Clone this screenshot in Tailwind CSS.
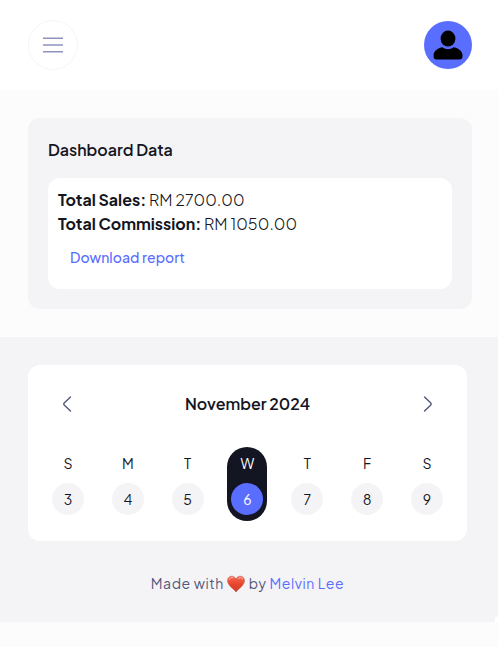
<!DOCTYPE html>
<html lang="en">
<head>
<meta charset="utf-8">
<title>Dashboard</title>
<script src="https://cdn.jsdelivr.net/npm/@tailwindcss/browser@4"></script>
</head>
<body class="w-[498px] h-[647px] overflow-hidden bg-[#fcfcfc] font-['Plus_Jakarta_Sans','Inter',sans-serif] text-[#141522] text-base leading-6">
<header class="flex h-[90px] items-center justify-between bg-white pl-7 pr-[26px]">
  <button class="flex size-[50px] items-center justify-center rounded-full border border-[#f5f5f7]" aria-label="Menu">
    <svg width="20" height="16" viewBox="0 0 20 16" fill="none" stroke="#8e92bc" stroke-width="1.5"><path d="M0 1.25H20M0 8H20M0 14.75H20"/></svg>
  </button>
  <div class="flex size-12 items-center justify-center rounded-full bg-[#596dff]">
    <svg width="30" height="30" viewBox="0 0 30 30" fill="#000"><ellipse cx="15" cy="8.6" rx="7.4" ry="8"/><path d="M9.2 17.3Q15 21.2 20.8 17.3C26.5 18.6 29.5 21.8 29.5 25.3V27Q29.5 29.4 27 29.4H3Q.6 29.4 .6 27V25.3C.6 21.8 3.5 18.6 9.2 17.3Z"/></svg>
  </div>
</header>
<main>
  <section class="pt-7 pb-7 pl-7 pr-[26px]">
    <div class="h-[191px] rounded-xl bg-[#f4f4f7] p-5">
      <h1 class="font-semibold">Dashboard Data</h1>
      <div class="mt-4 h-[111px] rounded-xl bg-white p-[10px]">
        <p class="flex whitespace-nowrap"><b class="w-[91px] font-bold">Total Sales:</b><span class="font-light tracking-[0.1px]">RM 2700.00</span></p>
        <p class="flex whitespace-nowrap"><b class="w-[146px] font-bold">Total Commission:</b><span class="font-light tracking-[0.1px]">RM 1050.00</span></p>
        <a class="mt-[11px] ml-3 block text-sm font-medium leading-[21px] tracking-[0.07px] text-[#596dff]">Download report</a>
      </div>
    </div>
  </section>
  <section class="flex h-[285px] flex-col bg-[#f4f4f7] pt-7 pl-7 pr-[31px]">
    <div class="h-[176px] rounded-xl bg-white px-5 pt-[27px]">
      <div class="flex h-6 items-center justify-between px-[14px]">
        <svg width="10" height="16" viewBox="0 0 10 16" fill="none" stroke="#54577a" stroke-width="1.4" stroke-linecap="round" stroke-linejoin="round"><path d="M8.5 1 2.2 7.1Q1.3 8 2.2 8.9L8.5 15"/></svg>
        <h2 class="font-semibold">November 2024</h2>
        <svg width="10" height="16" viewBox="0 0 10 16" fill="none" stroke="#54577a" stroke-width="1.4" stroke-linecap="round" stroke-linejoin="round"><path d="M1.5 1 7.8 7.1Q8.7 8 7.8 8.9L1.5 15"/></svg>
      </div>
      <div class="mt-[31px] flex justify-between text-sm leading-[21px]">
        <div class="flex h-[74px] w-10 flex-col items-center pt-[6px]"><span>S</span><span class="mt-[9px] flex size-8 items-center justify-center rounded-full bg-[#f4f4f7]">3</span></div>
        <div class="flex h-[74px] w-10 flex-col items-center pt-[6px]"><span>M</span><span class="mt-[9px] flex size-8 items-center justify-center rounded-full bg-[#f4f4f7]">4</span></div>
        <div class="flex h-[74px] w-10 flex-col items-center pt-[6px]"><span>T</span><span class="mt-[9px] flex size-8 items-center justify-center rounded-full bg-[#f4f4f7]">5</span></div>
        <div class="flex h-[74px] w-10 flex-col items-center rounded-full bg-[#141522] pt-[6px] text-white"><span>W</span><span class="mt-[9px] flex size-8 items-center justify-center rounded-full bg-[#596dff]">6</span></div>
        <div class="flex h-[74px] w-10 flex-col items-center pt-[6px]"><span>T</span><span class="mt-[9px] flex size-8 items-center justify-center rounded-full bg-[#f4f4f7]">7</span></div>
        <div class="flex h-[74px] w-10 flex-col items-center pt-[6px]"><span>F</span><span class="mt-[9px] flex size-8 items-center justify-center rounded-full bg-[#f4f4f7]">8</span></div>
        <div class="flex h-[74px] w-10 flex-col items-center pt-[6px]"><span>S</span><span class="mt-[9px] flex size-8 items-center justify-center rounded-full bg-[#f4f4f7]">9</span></div>
      </div>
    </div>
    <footer class="mt-8 flex items-center self-center whitespace-nowrap text-sm leading-[21px] tracking-[0.56px] text-[#54577a]">
      <span>Made with</span>
      <svg class="mx-[3px]" width="18" height="18" viewBox="0 0 18 18"><defs><linearGradient id="h" x1="0" y1="0" x2="0" y2="1"><stop stop-color="#f36c55"/><stop offset=".5" stop-color="#e8452f"/><stop offset="1" stop-color="#cf3d2b"/></linearGradient></defs><path fill="url(#h)" stroke="#c64c3c" stroke-width=".5" d="M9 17C7.3 14.5.5 10.5.5 5.5C.5 .7 6.8-.5 9 3.8C11.2-.5 17.5.7 17.5 5.5C17.5 10.5 10.7 14.5 9 17Z"/><path d="M2 4.6Q3.3 1.7 6 2.5M11.3 3.3Q13.5 1.3 15.7 3.7" fill="none" stroke="#ffb3a3" stroke-linecap="round"/></svg>
      <span class="ml-px">by <a class="text-[#596dff]">Melvin Lee</a></span>
    </footer>
  </section>
</main>
<div class="absolute left-[495px] top-[617px] h-[5px] w-[3px] bg-white"></div>
</body>
</html>
